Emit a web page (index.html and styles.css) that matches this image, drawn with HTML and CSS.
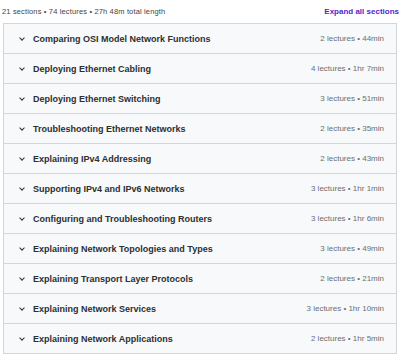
FILE: index.html
```html
<!DOCTYPE html>
<html lang="en">
<head>
  <meta charset="UTF-8">
  <title>Course content</title>
  <link rel="stylesheet" href="styles.css">
</head>
<body>
  <div class="summary">
    <span>21 sections • 74 lectures • 27h 48m total length</span>
    <a href="#" class="expand">Expand all sections</a>
  </div>
  <div class="sections">
    <div class="section"><span class="chev"></span><span class="title">Comparing OSI Model Network Functions</span><span class="meta">2 lectures • 44min</span></div>
    <div class="section"><span class="chev"></span><span class="title">Deploying Ethernet Cabling</span><span class="meta">4 lectures • 1hr 7min</span></div>
    <div class="section"><span class="chev"></span><span class="title">Deploying Ethernet Switching</span><span class="meta">3 lectures • 51min</span></div>
    <div class="section"><span class="chev"></span><span class="title">Troubleshooting Ethernet Networks</span><span class="meta">2 lectures • 35min</span></div>
    <div class="section"><span class="chev"></span><span class="title">Explaining IPv4 Addressing</span><span class="meta">2 lectures • 43min</span></div>
    <div class="section"><span class="chev"></span><span class="title">Supporting IPv4 and IPv6 Networks</span><span class="meta">3 lectures • 1hr 1min</span></div>
    <div class="section"><span class="chev"></span><span class="title">Configuring and Troubleshooting Routers</span><span class="meta">3 lectures • 1hr 6min</span></div>
    <div class="section"><span class="chev"></span><span class="title">Explaining Network Topologies and Types</span><span class="meta">3 lectures • 49min</span></div>
    <div class="section"><span class="chev"></span><span class="title">Explaining Transport Layer Protocols</span><span class="meta">2 lectures • 21min</span></div>
    <div class="section"><span class="chev"></span><span class="title">Explaining Network Services</span><span class="meta">3 lectures • 1hr 10min</span></div>
    <div class="section"><span class="chev"></span><span class="title">Explaining Network Applications</span><span class="meta">2 lectures • 1hr 5min</span></div>
  </div>
</body>
</html>
```
FILE: styles.css
```css
body { margin: 0; padding: 0 3px 0 2px; font-family: "Liberation Sans", Arial, sans-serif; background: #fff; color: #2d2f31; }
.summary { display: flex; justify-content: space-between; align-items: center; height: 23px; font-size: 7.5px; letter-spacing: 0.15px; color: #444; }
.expand { color: #5624d0; font-weight: bold; text-decoration: none; font-size: 8px; letter-spacing: 0; margin-right: -2px; }
.sections { margin-left: 1px; border: 1px solid #d1d7dc; border-bottom: none; }
.section { display: flex; align-items: center; height: 29px; border-bottom: 1px solid #d1d7dc; background: #f7f9fa; padding: 0 12px 0 16px; }
.chev { width: 3px; height: 3px; border-right: 1px solid #2d2f31; border-bottom: 1px solid #2d2f31; transform: rotate(45deg); margin: 0 9px 2px 0; }
.title { flex: 1; font-weight: bold; font-size: 9px; }
.meta { font-size: 8px; color: #6a6f73; }
```
